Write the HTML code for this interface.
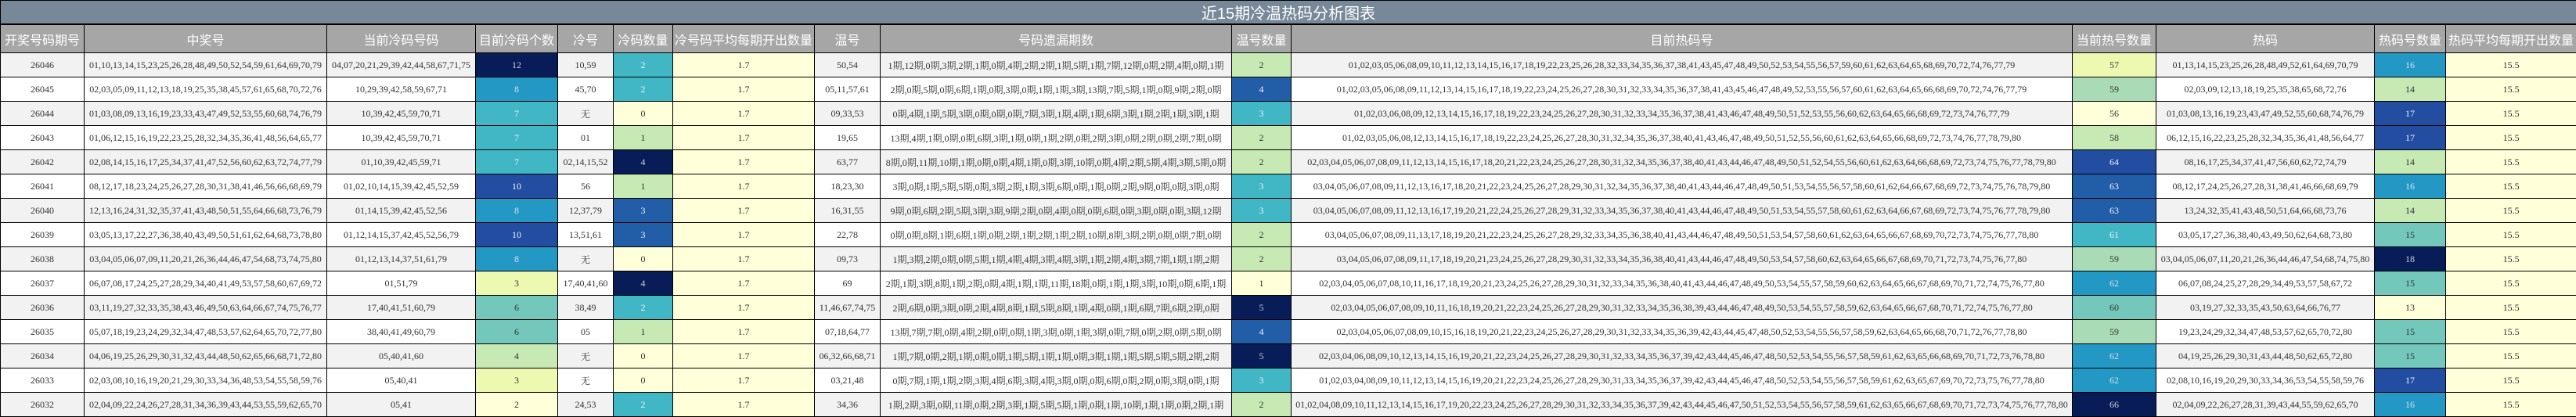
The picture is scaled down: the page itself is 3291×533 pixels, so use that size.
<!DOCTYPE html>
<html><head><meta charset="utf-8">
<style>
html,body{margin:0;padding:0;background:#fff;}
body{width:3291px;height:532px;overflow:hidden;}
table{border-collapse:collapse;table-layout:fixed;width:3291px;}
td{border:1px solid #000;padding:0;text-align:center;white-space:nowrap;overflow:hidden;
 font-family:"Liberation Serif","Noto Serif CJK SC",serif;font-size:12px;color:#333;height:30px;}
tr.t td{background:#778899;color:#fff;font-family:"Liberation Sans","Noto Sans CJK SC",sans-serif;font-size:20px;height:28px;border-bottom:2px solid #000;}
tr.h td{background:#a6a6a6;color:#fff;font-family:"Liberation Sans","Noto Sans CJK SC",sans-serif;font-size:16px;height:35px;}
tr.o td{background:#f2f2f2;}
tr.e td{background:#fff;}
tr td.c0{background:#ffffd9;color:#333;}
tr td.c1{background:#edf8b1;color:#333;}
tr td.c2{background:#c7e9b4;color:#333;}
tr td.cg{background:#a9dcb6;color:#333;}
tr td.c3{background:#73c8bb;color:#333;}
tr td.c4{background:#41b6c4;color:#eef;}
tr td.c5{background:#2398c4;color:#dde;}
tr td.c6{background:#225ea8;color:#eef;}
tr td.c7{background:#234da0;color:#eef;}
tr td.c8{background:#081d58;color:#ccd;}
</style></head><body>
<table>
<colgroup><col style="width:107px"><col style="width:310px"><col style="width:190px"><col style="width:105px"><col style="width:71px"><col style="width:76px"><col style="width:181px"><col style="width:84px"><col style="width:449px"><col style="width:76px"><col style="width:998px"><col style="width:107px"><col style="width:279px"><col style="width:91px"><col style="width:167px"></colgroup>
<tr class="t"><td colspan="15">近15期冷温热码分析图表</td></tr>
<tr class="h"><td>开奖号码期号</td><td>中奖号</td><td>当前冷码号码</td><td>目前冷码个数</td><td>冷号</td><td>冷码数量</td><td>冷号码平均每期开出数量</td><td>温号</td><td>号码遗漏期数</td><td>温号数量</td><td>目前热码号</td><td>当前热号数量</td><td>热码</td><td>热码号数量</td><td>热码平均每期开出数量</td></tr>
<tr class="o"><td>26046</td><td>01,10,13,14,15,23,25,26,28,48,49,50,52,54,59,61,64,69,70,79</td><td>04,07,20,21,29,39,42,44,58,67,71,75</td><td class="c8">12</td><td>10,59</td><td class="c4">2</td><td class="c0">1.7</td><td>50,54</td><td>1期,12期,0期,3期,2期,1期,0期,4期,2期,2期,1期,5期,1期,7期,12期,0期,2期,4期,0期,1期</td><td class="c2">2</td><td>01,02,03,05,06,08,09,10,11,12,13,14,15,16,17,18,19,22,23,25,26,28,32,33,34,35,36,37,38,41,43,45,47,48,49,50,52,53,54,55,56,57,59,60,61,62,63,64,65,68,69,70,72,74,76,77,79</td><td class="c1">57</td><td>01,13,14,15,23,25,26,28,48,49,52,61,64,69,70,79</td><td class="c5">16</td><td class="c0">15.5</td></tr>
<tr class="e"><td>26045</td><td>02,03,05,09,11,12,13,18,19,25,35,38,45,57,61,65,68,70,72,76</td><td>10,29,39,42,58,59,67,71</td><td class="c5">8</td><td>45,70</td><td class="c4">2</td><td class="c0">1.7</td><td>05,11,57,61</td><td>2期,0期,5期,0期,6期,1期,0期,3期,0期,1期,1期,3期,13期,7期,5期,1期,0期,9期,2期,0期</td><td class="c6">4</td><td>01,02,03,05,06,08,09,11,12,13,14,15,16,17,18,19,22,23,24,25,26,27,28,30,31,32,33,34,35,36,37,38,41,43,45,46,47,48,49,52,53,55,56,57,60,61,62,63,64,65,66,68,69,70,72,74,76,77,79</td><td class="cg">59</td><td>02,03,09,12,13,18,19,25,35,38,65,68,72,76</td><td class="c2">14</td><td class="c0">15.5</td></tr>
<tr class="o"><td>26044</td><td>01,03,08,09,13,16,19,23,33,43,47,49,52,53,55,60,68,74,76,79</td><td>10,39,42,45,59,70,71</td><td class="c4">7</td><td>无</td><td class="c0">0</td><td class="c0">1.7</td><td>09,33,53</td><td>0期,4期,1期,5期,3期,0期,0期,0期,7期,3期,1期,4期,1期,6期,3期,1期,2期,1期,3期,1期</td><td class="c4">3</td><td>01,02,03,06,08,09,12,13,14,15,16,17,18,19,22,23,24,25,26,27,28,30,31,32,33,34,35,36,37,38,41,43,46,47,48,49,50,51,52,53,55,56,60,62,63,64,65,66,68,69,72,73,74,76,77,79</td><td class="c0">56</td><td>01,03,08,13,16,19,23,43,47,49,52,55,60,68,74,76,79</td><td class="c7">17</td><td class="c0">15.5</td></tr>
<tr class="e"><td>26043</td><td>01,06,12,15,16,19,22,23,25,28,32,34,35,36,41,48,56,64,65,77</td><td>10,39,42,45,59,70,71</td><td class="c4">7</td><td>01</td><td class="c2">1</td><td class="c0">1.7</td><td>19,65</td><td>13期,4期,1期,0期,0期,6期,3期,1期,0期,1期,2期,0期,2期,3期,0期,2期,0期,2期,7期,0期</td><td class="c2">2</td><td>01,02,03,05,06,08,12,13,14,15,16,17,18,19,22,23,24,25,26,27,28,30,31,32,34,35,36,37,38,40,41,43,46,47,48,49,50,51,52,55,56,60,61,62,63,64,65,66,68,69,72,73,74,76,77,78,79,80</td><td class="c2">58</td><td>06,12,15,16,22,23,25,28,32,34,35,36,41,48,56,64,77</td><td class="c7">17</td><td class="c0">15.5</td></tr>
<tr class="o"><td>26042</td><td>02,08,14,15,16,17,25,34,37,41,47,52,56,60,62,63,72,74,77,79</td><td>01,10,39,42,45,59,71</td><td class="c4">7</td><td>02,14,15,52</td><td class="c8">4</td><td class="c0">1.7</td><td>63,77</td><td>8期,0期,11期,10期,1期,0期,0期,4期,1期,0期,3期,10期,0期,4期,2期,5期,4期,3期,5期,0期</td><td class="c2">2</td><td>02,03,04,05,06,07,08,09,11,12,13,14,15,16,17,18,20,21,22,23,24,25,26,27,28,30,31,32,34,35,36,37,38,40,41,43,44,46,47,48,49,50,51,52,54,55,56,60,61,62,63,64,66,68,69,72,73,74,75,76,77,78,79,80</td><td class="c7">64</td><td>08,16,17,25,34,37,41,47,56,60,62,72,74,79</td><td class="c2">14</td><td class="c0">15.5</td></tr>
<tr class="e"><td>26041</td><td>08,12,17,18,23,24,25,26,27,28,30,31,38,41,46,56,66,68,69,79</td><td>01,02,10,14,15,39,42,45,52,59</td><td class="c7">10</td><td>56</td><td class="c2">1</td><td class="c0">1.7</td><td>18,23,30</td><td>3期,0期,1期,5期,5期,0期,3期,2期,1期,3期,6期,0期,1期,0期,2期,9期,0期,0期,3期,0期</td><td class="c4">3</td><td>03,04,05,06,07,08,09,11,12,13,16,17,18,20,21,22,23,24,25,26,27,28,29,30,31,32,34,35,36,37,38,40,41,43,44,46,47,48,49,50,51,53,54,55,56,57,58,60,61,62,64,66,67,68,69,72,73,74,75,76,78,79,80</td><td class="c6">63</td><td>08,12,17,24,25,26,27,28,31,38,41,46,66,68,69,79</td><td class="c5">16</td><td class="c0">15.5</td></tr>
<tr class="o"><td>26040</td><td>12,13,16,24,31,32,35,37,41,43,48,50,51,55,64,66,68,73,76,79</td><td>01,14,15,39,42,45,52,56</td><td class="c5">8</td><td>12,37,79</td><td class="c6">3</td><td class="c0">1.7</td><td>16,31,55</td><td>9期,0期,6期,2期,5期,3期,3期,9期,2期,0期,4期,0期,0期,6期,0期,3期,0期,0期,3期,12期</td><td class="c4">3</td><td>03,04,05,06,07,08,09,11,12,13,16,17,19,20,21,22,24,25,26,27,28,29,31,32,33,34,35,36,37,38,40,41,43,44,46,47,48,49,50,51,53,54,55,57,58,60,61,62,63,64,66,67,68,69,72,73,74,75,76,77,78,79,80</td><td class="c6">63</td><td>13,24,32,35,41,43,48,50,51,64,66,68,73,76</td><td class="c2">14</td><td class="c0">15.5</td></tr>
<tr class="e"><td>26039</td><td>03,05,13,17,22,27,36,38,40,43,49,50,51,61,62,64,68,73,78,80</td><td>01,12,14,15,37,42,45,52,56,79</td><td class="c7">10</td><td>13,51,61</td><td class="c6">3</td><td class="c0">1.7</td><td>22,78</td><td>0期,0期,8期,1期,6期,1期,0期,2期,1期,2期,1期,2期,10期,8期,3期,2期,0期,0期,7期,0期</td><td class="c2">2</td><td>03,04,05,06,07,08,09,11,13,17,18,19,20,21,22,23,24,25,26,27,28,29,32,33,34,35,36,38,40,41,43,44,46,47,48,49,50,51,53,54,57,58,60,61,62,63,64,65,66,67,68,69,70,72,73,74,75,76,77,78,80</td><td class="c4">61</td><td>03,05,17,27,36,38,40,43,49,50,62,64,68,73,80</td><td class="c3">15</td><td class="c0">15.5</td></tr>
<tr class="o"><td>26038</td><td>03,04,05,06,07,09,11,20,21,26,36,44,46,47,54,68,73,74,75,80</td><td>01,12,13,14,37,51,61,79</td><td class="c5">8</td><td>无</td><td class="c0">0</td><td class="c0">1.7</td><td>09,73</td><td>1期,3期,2期,0期,0期,5期,1期,4期,4期,3期,4期,3期,1期,2期,4期,3期,7期,1期,1期,2期</td><td class="c2">2</td><td>03,04,05,06,07,08,09,11,17,18,19,20,21,23,24,25,26,27,28,29,30,31,32,33,34,35,36,38,40,41,43,44,46,47,48,49,50,53,54,57,58,60,62,63,64,65,66,67,68,69,70,71,72,73,74,75,76,77,80</td><td class="cg">59</td><td>03,04,05,06,07,11,20,21,26,36,44,46,47,54,68,74,75,80</td><td class="c8">18</td><td class="c0">15.5</td></tr>
<tr class="e"><td>26037</td><td>06,07,08,17,24,25,27,28,29,34,40,41,49,53,57,58,60,67,69,72</td><td>01,51,79</td><td class="c1">3</td><td>17,40,41,60</td><td class="c8">4</td><td class="c0">1.7</td><td>69</td><td>2期,1期,3期,8期,1期,2期,0期,4期,1期,1期,11期,18期,0期,1期,1期,3期,10期,0期,6期,1期</td><td class="c0">1</td><td>02,03,04,05,06,07,08,10,11,16,17,18,19,20,21,23,24,25,26,27,28,29,30,31,32,33,34,35,36,38,40,41,43,44,46,47,48,49,50,53,54,55,57,58,59,60,62,63,64,65,66,67,68,69,70,71,72,74,75,76,77,80</td><td class="c5">62</td><td>06,07,08,24,25,27,28,29,34,49,53,57,58,67,72</td><td class="c3">15</td><td class="c0">15.5</td></tr>
<tr class="o"><td>26036</td><td>03,11,19,27,32,33,35,38,43,46,49,50,63,64,66,67,74,75,76,77</td><td>17,40,41,51,60,79</td><td class="c3">6</td><td>38,49</td><td class="c4">2</td><td class="c0">1.7</td><td>11,46,67,74,75</td><td>2期,6期,0期,3期,0期,2期,4期,8期,1期,5期,8期,1期,4期,0期,1期,6期,7期,6期,2期,0期</td><td class="c8">5</td><td>02,03,04,05,06,07,08,09,10,11,16,18,19,20,21,22,23,24,25,26,27,28,29,30,31,32,33,34,35,36,38,39,43,44,46,47,48,49,50,53,54,55,57,58,59,62,63,64,65,66,67,68,70,71,72,74,75,76,77,80</td><td class="c3">60</td><td>03,19,27,32,33,35,43,50,63,64,66,76,77</td><td class="c0">13</td><td class="c0">15.5</td></tr>
<tr class="e"><td>26035</td><td>05,07,18,19,23,24,29,32,34,47,48,53,57,62,64,65,70,72,77,80</td><td>38,40,41,49,60,79</td><td class="c3">6</td><td>05</td><td class="c2">1</td><td class="c0">1.7</td><td>07,18,64,77</td><td>13期,7期,7期,0期,4期,2期,0期,0期,1期,3期,0期,1期,3期,0期,7期,0期,2期,0期,5期,0期</td><td class="c6">4</td><td>02,03,04,05,06,07,08,09,10,15,16,18,19,20,21,22,23,24,25,26,27,28,29,30,31,32,33,34,35,36,39,42,43,44,45,47,48,50,52,53,54,55,56,57,58,59,62,63,64,65,66,68,70,71,72,76,77,78,80</td><td class="cg">59</td><td>19,23,24,29,32,34,47,48,53,57,62,65,70,72,80</td><td class="c3">15</td><td class="c0">15.5</td></tr>
<tr class="o"><td>26034</td><td>04,06,19,25,26,29,30,31,32,43,44,48,50,62,65,66,68,71,72,80</td><td>05,40,41,60</td><td class="c2">4</td><td>无</td><td class="c0">0</td><td class="c0">1.7</td><td>06,32,66,68,71</td><td>1期,7期,0期,2期,1期,0期,0期,1期,5期,1期,1期,0期,3期,1期,1期,5期,5期,5期,2期,2期</td><td class="c8">5</td><td>02,03,04,06,08,09,10,12,13,14,15,16,19,20,21,22,23,24,25,26,27,28,29,30,31,32,33,34,35,36,37,39,42,43,44,45,46,47,48,50,52,53,54,55,56,57,58,59,61,62,63,65,66,68,69,70,71,72,73,76,78,80</td><td class="c5">62</td><td>04,19,25,26,29,30,31,43,44,48,50,62,65,72,80</td><td class="c3">15</td><td class="c0">15.5</td></tr>
<tr class="e"><td>26033</td><td>02,03,08,10,16,19,20,21,29,30,33,34,36,48,53,54,55,58,59,76</td><td>05,40,41</td><td class="c1">3</td><td>无</td><td class="c0">0</td><td class="c0">1.7</td><td>03,21,48</td><td>0期,7期,1期,1期,2期,3期,4期,6期,3期,4期,3期,0期,0期,6期,0期,2期,0期,3期,0期,1期</td><td class="c4">3</td><td>01,02,03,04,08,09,10,11,12,13,14,15,16,19,20,21,22,23,24,25,26,27,28,29,30,31,33,34,35,36,37,39,42,43,44,45,46,47,48,50,52,53,54,55,56,57,58,59,61,62,63,65,67,69,70,72,73,75,76,77,78,80</td><td class="c5">62</td><td>02,08,10,16,19,20,29,30,33,34,36,53,54,55,58,59,76</td><td class="c7">17</td><td class="c0">15.5</td></tr>
<tr class="o"><td>26032</td><td>02,04,09,22,24,26,27,28,31,34,36,39,43,44,53,55,59,62,65,70</td><td>05,41</td><td class="c0">2</td><td>24,53</td><td class="c4">2</td><td class="c0">1.7</td><td>34,36</td><td>1期,2期,3期,0期,11期,0期,2期,3期,1期,5期,5期,1期,0期,1期,10期,1期,1期,0期,2期,1期</td><td class="c2">2</td><td>01,02,04,08,09,10,11,12,13,14,15,16,17,19,20,22,23,24,25,26,27,28,29,30,31,32,33,34,35,36,37,39,42,43,44,45,46,47,50,51,52,53,54,55,56,57,58,59,61,62,63,65,66,67,68,69,70,71,72,73,74,75,76,77,78,80</td><td class="c8">66</td><td>02,04,09,22,26,27,28,31,39,43,44,55,59,62,65,70</td><td class="c5">16</td><td class="c0">15.5</td></tr>
</table>
</body></html>
